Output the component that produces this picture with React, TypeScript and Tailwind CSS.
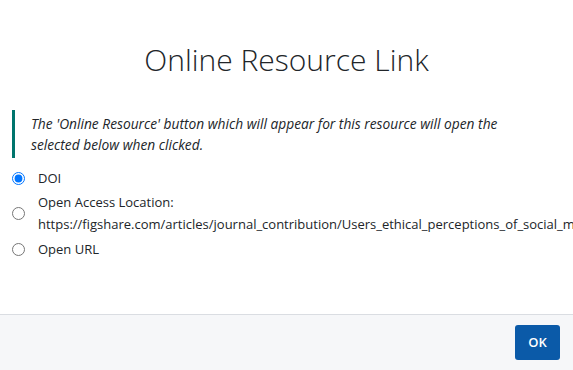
import React from "react";

export default function App() {
  return (
    <div
      className="w-[573px] h-[370px] bg-white flex flex-col overflow-hidden text-[#212529]"
      style={{ fontFamily: '"Open Sans", "Noto Sans", sans-serif' }}
    >
      <div className="flex-1 flex flex-col">
        <h1 className="text-[30px] font-light text-center leading-[36px] pt-[42px] text-[#212529]">
          Online Resource Link
        </h1>
        <div className="mt-[32px] ml-[12px] border-l-[3px] border-[#00756d] pl-[16px] py-[3px] text-[13.75px] italic leading-[21px]">
          The 'Online Resource' button which will appear for this resource will open the
          <br />
          selected below when clicked.
        </div>
        <div className="mt-[9px] ml-[12px] flex flex-col text-[13px] leading-[22px]">
          <label className="flex items-center gap-[13px] whitespace-nowrap">
            <input type="radio" name="r" defaultChecked className="w-[13px] h-[13px] m-0" />
            <span>DOI</span>
          </label>
          <label className="flex items-center gap-[13px] whitespace-nowrap mt-[2px]">
            <input type="radio" name="r" className="w-[13px] h-[13px] m-0" />
            <span>
              Open Access Location:
              <br />
              https://figshare.com/articles/journal_contribution/Users_ethical_perceptions_of_social_media_research
            </span>
          </label>
          <label className="flex items-center gap-[13px] whitespace-nowrap mt-[3px]">
            <input type="radio" name="r" className="w-[13px] h-[13px] m-0" />
            <span>Open URL</span>
          </label>
        </div>
      </div>
      <div className="h-[56px] border-t border-[#dadde2] bg-[#f6f7f9] flex items-center justify-end pr-[13px]">
        <button className="w-[45px] h-[35px] rounded-[3px] bg-[#0b5aa8] text-white text-[13px] font-semibold">
          OK
        </button>
      </div>
    </div>
  );
}
